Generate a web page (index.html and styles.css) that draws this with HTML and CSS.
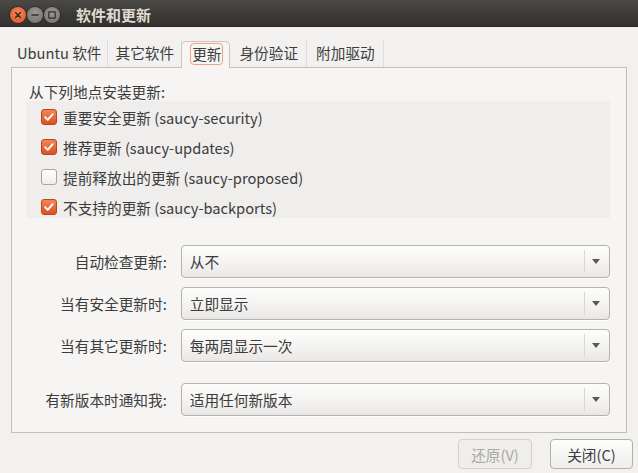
FILE: index.html
```html
<!DOCTYPE html>
<html lang="zh-CN">
<head>
  <meta charset="UTF-8" />
  <meta name="viewport" content="width=device-width, initial-scale=1" />
  <title>软件和更新</title>
  <link rel="stylesheet" href="styles.css">
</head>
<body>
<header class="titlebar">
  <div class="wm-buttons">
    <span class="wm close">
      <svg width="16" height="16" viewBox="0 0 16 16"><path d="M5.6 5.6l4.8 4.8M10.4 5.6l-4.8 4.8" stroke="#3a2a22" stroke-width="1.4" stroke-linecap="round"/></svg>
    </span>
    <span class="wm">
      <svg width="16" height="16" viewBox="0 0 16 16"><path d="M4.5 8h7" stroke="#2e2d2a" stroke-width="1.4"/></svg>
    </span>
    <span class="wm">
      <svg width="16" height="16" viewBox="0 0 16 16"><rect x="4.8" y="4.8" width="6.4" height="6.4" rx="0.5" fill="none" stroke="#2e2d2a" stroke-width="1.2"/></svg>
    </span>
  </div>
  <h1>软件和更新</h1>
</header>

<main class="content">
  <nav class="tabs">
    <span class="tab">Ubuntu 软件</span>
    <span class="tab">其它软件</span>
    <span class="tab active"><span class="focus">更新</span></span>
    <span class="tab wide">身份验证</span>
    <span class="tab wide">附加驱动</span>
  </nav>

  <section class="notebook">
    <p class="heading">从下列地点安装更新:</p>
    <div class="sources">
      <label class="check"><span class="box checked"></span>重要安全更新 (saucy-security)</label>
      <label class="check"><span class="box checked"></span>推荐更新 (saucy-updates)</label>
      <label class="check"><span class="box"></span>提前释放出的更新 (saucy-proposed)</label>
      <label class="check"><span class="box checked"></span>不支持的更新 (saucy-backports)</label>
    </div>

    <div class="form">
      <div class="row">
        <span class="label">自动检查更新:</span>
        <div class="combo"><span class="value">从不</span><span class="arrow"></span></div>
      </div>
      <div class="row">
        <span class="label">当有安全更新时:</span>
        <div class="combo"><span class="value">立即显示</span><span class="arrow"></span></div>
      </div>
      <div class="row">
        <span class="label">当有其它更新时:</span>
        <div class="combo"><span class="value">每两周显示一次</span><span class="arrow"></span></div>
      </div>
      <div class="row spaced">
        <span class="label">有新版本时通知我:</span>
        <div class="combo"><span class="value">适用任何新版本</span><span class="arrow"></span></div>
      </div>
    </div>
  </section>

  <footer class="actions">
    <button class="btn" disabled>还原(V)</button>
    <button class="btn close-btn">关闭(C)</button>
  </footer>
</main>
</body>
</html>
```

FILE: styles.css
```css
* {
  box-sizing: border-box;
}

body {
  margin: 0;
  width: 638px;
  height: 473px;
  overflow: hidden;
  background-color: #f2f1f0;
  color: #3c3c3c;
  font-family: "Noto Sans CJK SC", "Noto Sans", sans-serif;
  font-size: 14.67px;
}

/* title bar */
.titlebar {
  height: 27px;
  display: flex;
  align-items: center;
  background: linear-gradient(#4a4945, #3a3935 60%, #33322e);
  border-bottom: 1px solid #2a2926;
}
.wm-buttons {
  display: flex;
  align-items: center;
  gap: 1px;
  padding-left: 10px;
  margin-top: 3px;
}
.wm {
  width: 16px;
  height: 16px;
  border-radius: 50%;
  background: radial-gradient(circle at 50% 35%, #9a9893, #6f6d68);
  box-shadow: 0 0 0 1px #2c2b28;
  display: flex;
}
.wm.close {
  background: radial-gradient(circle at 50% 35%, #f6875a, #de4f24);
}
.titlebar h1 {
  margin: 0 0 0 16px;
  font-size: 15px;
  font-weight: bold;
  color: #dfdbd2;
  line-height: 27px;
  padding-top: 2px;
}

/* body */
.content {
  padding: 13px 11px 0 11px;
}

.tabs {
  display: flex;
  height: 27px;
  padding-left: 1px;
  align-items: stretch;
}
.tab {
  display: flex;
  align-items: center;
  padding: 0 7px;
  border-right: 1px solid #e0deda;
  line-height: 1;
}
.tab:first-child {
  padding-left: 5px;
  padding-right: 6px;
}
.tab.wide {
  padding: 0 8px 0 9px;
}
.tab.active {
  background-color: #f7f6f5;
  border: 1px solid #c9c6c1;
  border-bottom: none;
  border-radius: 5px 5px 0 0;
  margin-left: -1px;
  padding: 0 6px 0 8px;
  position: relative;
  top: 1px;
}
.focus {
  border: 1px solid #eea58a;
  border-radius: 4px;
  padding: 3px 1px 3px 1px;
  margin-top: -2px;
  box-shadow: 0 0 1px #f3c5b2;
}

.notebook {
  height: 366px;
  border: 1px solid #c2bfba;
  background-color: #f6f5f4;
  padding: 15px 16px 0 14px;
}
.heading {
  margin: 0;
  line-height: 18px;
  padding-left: 3px;
}
.sources {
  background-color: #efeeec;
  width: 584px;
  height: 117px;
  padding-top: 1px;
  display: flex;
  flex-direction: column;
}
.check {
  display: flex;
  align-items: center;
  flex: none;
  height: 30px;
  padding-left: 15px;
}
.box {
  width: 16px;
  height: 16px;
  margin-right: 6px;
  border-radius: 3px;
  border: 1px solid #a9a6a1;
  background: linear-gradient(#ffffff, #efeeec);
}
.box.checked {
  border-color: #b8491d;
  background-image: url("data:image/svg+xml,%3Csvg xmlns='http://www.w3.org/2000/svg' width='14' height='14' viewBox='0 0 14 14'%3E%3Cpath d='M3.2 7.2l2.5 2.6 5-5.6' fill='none' stroke='white' stroke-width='1.9' stroke-linecap='round' stroke-linejoin='round'/%3E%3C/svg%3E"), linear-gradient(#f4855a, #d9531f);
}

.form {
  margin-top: 27px;
  display: flex;
  flex-direction: column;
  gap: 9px;
}
.row {
  display: flex;
  align-items: center;
}
.row.spaced {
  margin-top: 12px;
}
.label {
  width: 141px;
  text-align: right;
  margin-right: 14px;
}
.combo {
  width: 430px;
  height: 33px;
  display: flex;
  align-items: center;
  border: 1px solid #b6b3ae;
  border-radius: 4px;
  background: linear-gradient(#fdfdfc, #f3f2f1 60%, #e9e8e6);
  box-shadow: 0 1px 0 rgba(255, 255, 255, 0.8);
}
.value {
  flex: 1;
  padding-left: 8px;
}
.arrow {
  width: 25px;
  height: 23px;
  border-left: 1px solid #d9d7d3;
  position: relative;
}
.arrow::after {
  content: "";
  position: absolute;
  left: 7px;
  top: 9px;
  border-left: 4px solid transparent;
  border-right: 4px solid transparent;
  border-top: 5px solid #5a5955;
}

.actions {
  display: flex;
  justify-content: flex-end;
  gap: 18px;
  margin-top: 6px;
  margin-right: -6px;
}
.btn {
  font-family: inherit;
  font-size: 14.67px;
  height: 30px;
  padding: 0;
  border: 1px solid #b3b0ab;
  border-radius: 4px;
  background: linear-gradient(#fdfdfc, #efeeec);
  color: #3c3c3c;
  width: 83px;
}
.btn:disabled {
  width: 74px;
  color: #aaa8a4;
  border-color: #d3d1cd;
  background: #efeeec;
}
```
